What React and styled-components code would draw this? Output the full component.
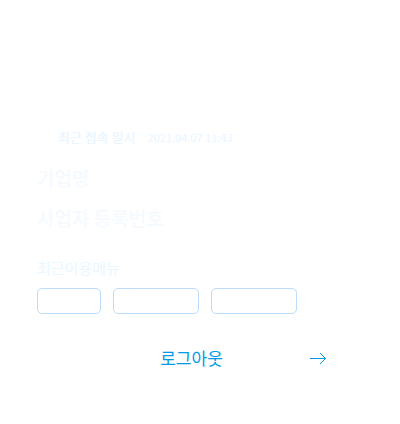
import React from "react";
import styled, { createGlobalStyle } from "styled-components";

const GlobalStyle = createGlobalStyle`
  *, *::before, *::after { box-sizing: border-box; }
  body {
    margin: 0;
    background: #ffffff;
    font-family: "Noto Sans CJK KR", "Noto Sans", sans-serif;
  }
`;

const Panel = styled.main`
  display: flex;
  flex-direction: column;
  padding: 127px 54px 44px 37px;
`;

const LastAccess = styled.p`
  display: flex;
  align-items: center;
  gap: 12px;
  margin: 0 0 17px;
  padding-left: 21px;
  color: #e9f5ff;
  font-size: 13px;
  font-weight: 500;
  line-height: 20px;
`;

const AccessTime = styled.time`
  font-size: 11px;
  font-weight: 400;
`;

const CompanyInfo = styled.dl`
  display: flex;
  flex-direction: column;
  gap: 12px;
  margin: 0 0 24px;
`;

const InfoLabel = styled.dt`
  color: #f5faff;
  font-size: 19px;
  font-weight: 500;
  line-height: 28px;
`;

const MenuTitle = styled.h2`
  margin: 0 0 8px;
  color: #e9f7ff;
  font-size: 15px;
  font-weight: 400;
  line-height: 24px;
`;

const MenuList = styled.nav`
  display: flex;
  flex-wrap: wrap;
  gap: 12px;
  margin-bottom: 28px;
`;

const MenuButton = styled.button`
  width: ${({ $wide }) => ($wide ? "86px" : "64px")};
  height: 26px;
  padding: 0;
  border: 1px solid #bbdcfb;
  border-radius: 5px;
  background: #ffffff;
`;

const LogoutButton = styled.button`
  display: grid;
  grid-template-columns: 1fr auto 1fr;
  align-items: center;
  width: 100%;
  padding: 4px 19px;
  border: 0;
  background: transparent;
  color: #009be6;
  font-family: inherit;
  font-size: 17px;
  font-weight: 400;
  line-height: 24px;
  cursor: pointer;
`;

const LogoutLabel = styled.span`
  grid-column: 2;
`;

const ArrowIcon = styled.svg`
  justify-self: end;
  width: 18px;
  height: 14px;
  fill: none;
  stroke: #0799dc;
`;

const recentMenus = [
  { name: "메뉴 1", wide: false },
  { name: "메뉴 2", wide: true },
  { name: "메뉴 3", wide: true },
];

export default function App() {
  return (
    <>
      <GlobalStyle />
      <Panel>
        <LastAccess>
          최근 접속 일시
          <AccessTime dateTime="2021-04-07T11:43">2021.04.07 11:43</AccessTime>
        </LastAccess>
        <CompanyInfo>
          <InfoLabel>기업명</InfoLabel>
          <InfoLabel>사업자 등록번호</InfoLabel>
        </CompanyInfo>
        <MenuTitle>최근이용메뉴</MenuTitle>
        <MenuList aria-label="최근이용메뉴">
          {recentMenus.map(({ name, wide }) => (
            <MenuButton key={name} type="button" aria-label={name} $wide={wide} />
          ))}
        </MenuList>
        <LogoutButton type="button">
          <LogoutLabel>로그아웃</LogoutLabel>
          <ArrowIcon viewBox="0 0 18 14" aria-hidden="true">
            <path d="M1 7.5H16.5M11 2L16.5 7.5L11 13" />
          </ArrowIcon>
        </LogoutButton>
      </Panel>
    </>
  );
}
